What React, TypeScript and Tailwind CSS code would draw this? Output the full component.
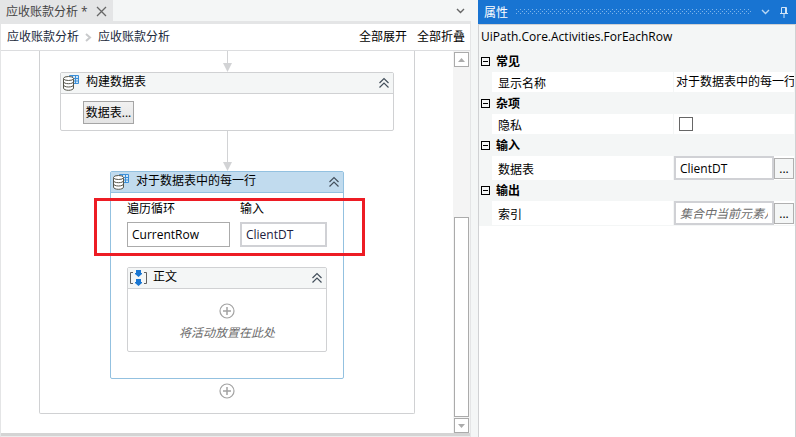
import type { ReactNode } from "react";

function DoubleChevron() {
  return (
    <svg width="10" height="12" viewBox="0 0 10 12" fill="none" stroke="#44505c" strokeWidth="1.2">
      <path d="M.5 6 5 1.5 9.500 6M.5 10.500 5 6 9.500 10.500" />
    </svg>
  );
}

function DataTableIcon() {
  return (
    <svg width="17" height="16" viewBox="0 0 17 16" className="shrink-0">
      <path d="M6.500.5h9v8h-9z" fill="#d4e8f8" stroke="#3b8fd8" />
      <path d="M6.500 3.500h9M6.500 6h9M12.500.5v8M9.500.5v8" stroke="#3b8fd8" fill="none" />
      <path
        d="M.5 3.500v9.500c0 1.400 2.200 2.300 5 2.300s5-.9 5-2.300V3.500z"
        fill="#fff"
        stroke="#56564c"
      />
      <ellipse cx="5.500" cy="3.500" rx="5" ry="2" fill="#fff" stroke="#56564c" />
      <path
        d="M.5 6.500c0 1.400 2.200 2.200 5 2.200s5-.8 5-2.200M.5 9.700c0 1.400 2.200 2.300 5 2.300s5-.9 5-2.300"
        fill="none"
        stroke="#56564c"
      />
    </svg>
  );
}

function SequenceIcon() {
  return (
    <svg width="17" height="16" viewBox="0 0 17 16" className="shrink-0">
      <path d="M3 2.500H.5v11H3M14 2.500h2.500v11H14" fill="none" stroke="#5f5f5f" />
      <path d="M6 0h5v3h1v1L8.500 7 5 4V3h1zM6 9h5v3h1v1l-3.500 3L5 13v-1h1z" fill="#1976d2" />
    </svg>
  );
}

function PlusCircle() {
  return (
    <svg width="16" height="16" viewBox="0 0 16 16" fill="none" stroke="#a3a3a3">
      <circle cx="8" cy="8" r="7" strokeWidth="1.200" />
      <path d="M8 4v8M4 8h8" strokeWidth="1.500" />
    </svg>
  );
}

function Arrow({ className }: { className: string }) {
  return (
    <div className={`flex flex-col items-center ${className}`}>
      <div className="w-px flex-1 bg-[#d2d3d5]" />
      <svg width="9" height="9" viewBox="0 0 9 9">
        <path d="M0 0h9L4.500 9z" fill="#d2d3d5" />
      </svg>
    </div>
  );
}

type NodeProps = {
  title: string;
  icon: ReactNode;
  selected?: boolean;
  className: string;
  children: ReactNode;
};

function ActivityNode({ title, icon, selected, className, children }: NodeProps) {
  return (
    <section
      className={`rounded-xs border bg-white ${selected ? "border-[#93c1e0]" : "border-[#d0d1d3]"} ${className}`}
    >
      <header
        className={`flex h-[21px] items-center border-b pl-0.5 pr-1 ${
          selected ? "border-[#93c1e0] bg-[#c1dbee]" : "border-[#d0d1d3] bg-[#f4f6f6]"
        }`}
      >
        {icon}
        <h2 className="ml-1.5 flex-1 pb-0.5 leading-4">{title}</h2>
        <button type="button" aria-label="折叠">
          <DoubleChevron />
        </button>
      </header>
      {children}
    </section>
  );
}

function ScrollBar() {
  return (
    <div className="flex w-[17px] flex-col items-center gap-px bg-[#f4f4f4] pt-px">
      <button
        type="button"
        aria-label="向上滚动"
        className="flex size-[15px] items-center justify-center border border-[#ababab] bg-white"
      >
        <svg width="7" height="4" viewBox="0 0 7 4">
          <path d="M0 4 3.500 0 7 4z" fill="#ababab" />
        </svg>
      </button>
      <div className="flex-1" />
      <div className="h-[200px] w-[15px] border border-[#ababab] bg-white" />
      <button
        type="button"
        aria-label="向下滚动"
        className="flex size-[15px] items-center justify-center border border-[#ababab] bg-white"
      >
        <svg width="7" height="4" viewBox="0 0 7 4">
          <path d="M0 0h7L3.500 4z" fill="#ababab" />
        </svg>
      </button>
    </div>
  );
}

function Designer() {
  return (
    <main className="flex min-w-0 flex-1 flex-col">
      <div className="flex h-[21px] items-stretch bg-[#f4f6f6]">
        <div className="flex w-[113px] items-center bg-[#e4e5e6] pl-1.5 pt-0.5 text-[#444]">
          <span className="flex-1 whitespace-nowrap">应收账款分析 *</span>
          <button type="button" aria-label="关闭" className="mr-1.5">
            <svg width="11" height="11" viewBox="0 0 11 11" stroke="#666" strokeWidth="1.300">
              <path d="m1 1 9 9M10 1l-9 9" />
            </svg>
          </button>
        </div>
        <div className="flex-1" />
        <button type="button" aria-label="标签列表" className="mr-0.5 px-1">
          <svg width="9" height="6" viewBox="0 0 9 6" fill="none" stroke="#666" strokeWidth="1.400">
            <path d="m1 1 3.500 3.500L8 1" />
          </svg>
        </button>
      </div>
      <div className="flex flex-1 flex-col border-x border-t-3 border-[#e4e5e6]">
        <div className="flex h-[27px] items-center border-b border-[#dcdddf] pl-1.5 pr-[5px]">
          <nav className="flex flex-1 items-center text-[#1b2a3c]">
            <a href="#root">应收账款分析</a>
            <svg width="7" height="9" viewBox="0 0 7 9" fill="none" stroke="#c9cacc" strokeWidth="2" className="mx-1.5">
              <path d="m1 1 4 3.500L1 8" />
            </svg>
            <a href="#current">应收账款分析</a>
          </nav>
          <div className="flex gap-2.5">
            <button type="button">全部展开</button>
            <button type="button">全部折叠</button>
          </div>
        </div>
        <div className="flex flex-1">
          <div className="min-w-0 flex-1">
            <div className="mx-auto flex w-[376px] flex-col items-center rounded-b-xs border-x border-b border-[#d0d1d3] pb-3.5">
              <Arrow className="h-[21px]" />
              <ActivityNode title="构建数据表" icon={<DataTableIcon />} className="h-[59px] w-[334px]">
                <button
                  type="button"
                  className="ml-[22px] mt-[7px] h-[23px] w-[51px] border border-[#a5a5a5] bg-linear-to-b from-[#f1f1f1] to-[#e4e4e4] text-center leading-5"
                >
                  数据表...
                </button>
              </ActivityNode>
              <Arrow className="h-10" />
              <ActivityNode
                title="对于数据表中的每一行"
                icon={<DataTableIcon />}
                selected
                className="relative h-[208px] w-[234px]"
              >
                <div className="px-4 pt-2">
                  <div className="flex gap-2.5">
                    <label className="w-[103px]">
                      <span className="block h-[21px] leading-4">遍历循环</span>
                      <input
                        defaultValue="CurrentRow"
                        className="block h-[25px] w-full border border-[#ababab] bg-white px-1"
                      />
                    </label>
                    <label className="w-[87px]">
                      <span className="block h-[21px] leading-4">输入</span>
                      <input
                        defaultValue="ClientDT"
                        className="block h-[25px] w-full border-2 border-[#d0d1d5] bg-white px-1 text-[#202040]"
                      />
                    </label>
                  </div>
                  <ActivityNode title="正文" icon={<SequenceIcon />} className="mt-5 h-[85px]">
                    <div className="flex flex-col items-center gap-1.5 pt-3.5">
                      <button type="button" aria-label="添加活动">
                        <PlusCircle />
                      </button>
                      <p className="italic leading-4 text-[#6d6d6d]">将活动放置在此处</p>
                    </div>
                  </ActivityNode>
                </div>
                <div className="pointer-events-none absolute -left-[17px] top-[26px] h-[58px] w-[271px] border-3 border-[#ed1c24]" />
              </ActivityNode>
              <button type="button" aria-label="添加活动" className="mt-1">
                <PlusCircle />
              </button>
            </div>
          </div>
          <ScrollBar />
        </div>
        <div className="h-[4px] border-b border-t-2 border-b-[#ececec] border-t-[#d4d4d4] bg-[#d4d4d4]" />
      </div>
    </main>
  );
}

function Category({ title }: { title: string }) {
  return (
    <div className="flex h-[21px] items-center gap-1.5 pl-0.5">
      <button
        type="button"
        aria-label={`折叠 ${title}`}
        className="flex size-[9px] items-center justify-center border border-black"
      >
        <span className="h-px w-[5px] bg-black" />
      </button>
      <h3 className="font-bold leading-4">{title}</h3>
    </div>
  );
}

function PropertyRow({ id, label, children }: { id: string; label: string; children: ReactNode }) {
  return (
    <div className="ml-[13px] grid min-h-5 grid-cols-[181px_minmax(0,1fr)] gap-px">
      <label htmlFor={id} className="flex items-center bg-white pl-1.5 pt-[3px]">
        {label}
      </label>
      <div className="flex items-center overflow-hidden bg-white">{children}</div>
    </div>
  );
}

function ExpressionBox({ id, value, placeholder }: { id: string; value?: string; placeholder?: string }) {
  return (
    <>
      <input
        id={id}
        defaultValue={value}
        placeholder={placeholder}
        className="h-6 min-w-0 flex-1 border-2 border-[#d0d1d5] bg-white px-1 placeholder:italic placeholder:text-[#6d6d6d]"
      />
      <button
        type="button"
        aria-label="编辑表达式"
        className="h-[21px] w-5 border border-[#b0b0b0] bg-[#f4f6f6] leading-5"
      >
        ...
      </button>
    </>
  );
}

function Properties() {
  return (
    <aside className="flex w-[318px] shrink-0 flex-col">
      <header className="flex h-6 items-center bg-[#1874d2] pl-1.5 pr-2 text-white">
        <h1 className="pt-0.5">属性</h1>
        <svg className="ml-2 h-[6px] min-w-0 flex-1">
          <defs>
            <pattern id="grip" width="4" height="4" patternUnits="userSpaceOnUse">
              <path d="M0 0h1v1H0zM2 2h1v1H2z" fill="#7db4ea" />
            </pattern>
          </defs>
          <rect width="100%" height="6" fill="url(#grip)" />
        </svg>
        <button type="button" aria-label="选项" className="ml-2.5">
          <svg width="9" height="6" viewBox="0 0 9 6" fill="none" stroke="#b9d7f4" strokeWidth="1.400">
            <path d="m1 1 3.500 3.500L8 1" />
          </svg>
        </button>
        <button type="button" aria-label="固定" className="ml-2.5">
          <svg width="8" height="11" viewBox="0 0 8 11" fill="none" stroke="#cfe3f7">
            <path d="M1.500 6V.5h5V6M5.500 0v6M0 6.500h8M4 7v4" />
          </svg>
        </button>
      </header>
      <div className="flex-1 border-x border-t border-[#d0d1d3] bg-white">
        <div className="bg-[#f4f6f6] pr-px">
          <p className="flex h-[26px] items-center pb-0.5 pl-0.5">UiPath.Core.Activities.ForEachRow</p>
          <Category title="常见" />
          <PropertyRow id="display-name" label="显示名称">
            <input
              id="display-name"
              defaultValue="对于数据表中的每一行"
              className="w-full bg-white pl-0.5"
            />
          </PropertyRow>
          <div className="h-px" />
          <Category title="杂项" />
          <PropertyRow id="private" label="隐私">
            <input
              id="private"
              type="checkbox"
              className="ml-[5px] size-[14px] appearance-none border border-[#666] bg-white"
            />
          </PropertyRow>
          <div className="h-px" />
          <Category title="输入" />
          <PropertyRow id="data-table" label="数据表">
            <ExpressionBox id="data-table" value="ClientDT" />
          </PropertyRow>
          <Category title="输出" />
          <PropertyRow id="index" label="索引">
            <ExpressionBox id="index" placeholder="集合中当前元素从零开始的索引" />
          </PropertyRow>
          <div className="h-px" />
        </div>
      </div>
    </aside>
  );
}

export default function App() {
  return (
    <div className="flex min-h-screen bg-white font-['Open_Sans','Noto_Sans_CJK_SC',sans-serif] text-xs text-black">
      <Designer />
      <div className="w-[7px] shrink-0 bg-[#f4f6f6]" />
      <Properties />
    </div>
  );
}
